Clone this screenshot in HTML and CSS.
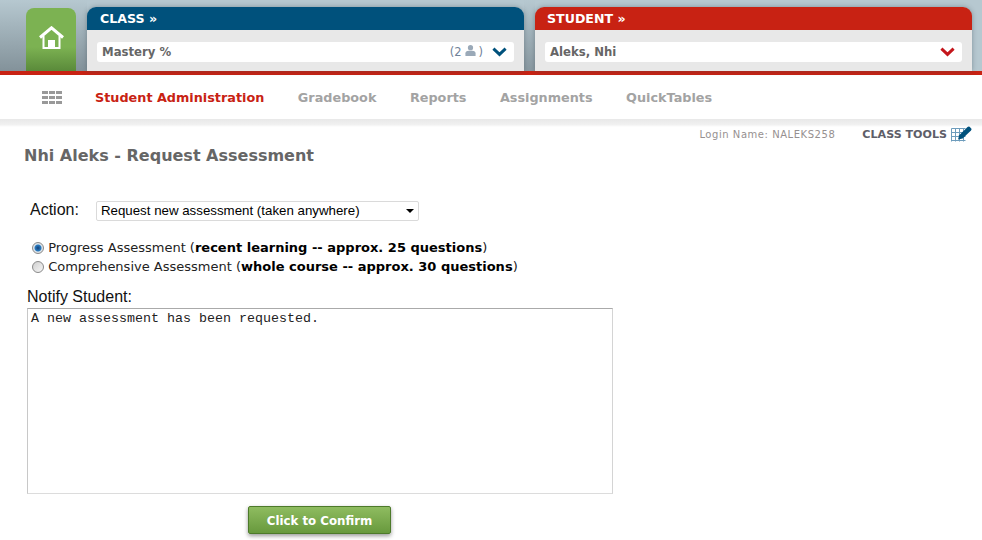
FILE: index.html
```html
<!DOCTYPE html>
<html lang="en">
<head>
  <meta charset="UTF-8" />
  <title>Request Assessment</title>
  <link rel="stylesheet" href="styles.css">
</head>
<body>
  <!-- Top panels -->
  <header class="top-bar">
    <a class="home-tile" href="#">
      <svg width="25" height="23" viewBox="0 0 25 23">
        <path d="M1 11.5 L12.5 1.8 L24 11.5" fill="none" stroke="#fff" stroke-width="3"/>
        <path d="M4.5 10 V22 H20.5 V10" fill="none" stroke="#fff" stroke-width="2"/>
        <rect x="9" y="14" width="7" height="8" fill="#fff"/>
      </svg>
    </a>
    <section class="panel panel-class">
      <div class="panel-head">CLASS &raquo;</div>
      <div class="panel-body">
        <div class="panel-field">
          <span class="field-name">Mastery %</span>
          <span class="field-count">(2
            <svg width="11" height="11" viewBox="0 0 13 13"><circle cx="6.5" cy="3.2" r="3.1" fill="#9aa9b8"/><path d="M0.5 13 V9.8 Q0.5 7.2 4.5 6.8 H8.5 Q12.5 7.2 12.5 9.8 V13 Z" fill="#9aa9b8"/></svg>
          )</span>
          <svg class="chevron" width="15" height="10" viewBox="0 0 16 10"><path d="M1.5 1.5 L8 7.5 L14.5 1.5" fill="none" stroke="#00517c" stroke-width="3.2"/></svg>
        </div>
      </div>
    </section>
    <section class="panel panel-student">
      <div class="panel-head">STUDENT &raquo;</div>
      <div class="panel-body">
        <div class="panel-field">
          <span class="field-name">Aleks, Nhi</span>
          <svg class="chevron" width="15" height="10" viewBox="0 0 16 10"><path d="M1.5 1.5 L8 7.5 L14.5 1.5" fill="none" stroke="#c4161c" stroke-width="3.2"/></svg>
        </div>
      </div>
    </section>
  </header>

  <!-- Main nav -->
  <nav class="main-nav">
    <div class="grid-icon">
      <i></i><i></i><i></i><i></i><i></i><i></i><i></i><i></i><i></i>
    </div>
    <a class="active" href="#">Student Administration</a>
    <a href="#">Gradebook</a>
    <a href="#">Reports</a>
    <a href="#">Assignments</a>
    <a href="#">QuickTables</a>
  </nav>
  <div class="nav-shadow"></div>

  <div class="tools-row">
    <span class="login-name">Login Name: NALEKS258</span>
    <a class="class-tools" href="#">CLASS TOOLS
      <svg width="21" height="17" viewBox="0 0 21 17">
        <path d="M0.5 2.5 H14.5 M0.5 6.5 H14.5 M0.5 10.5 H14.5 M0.5 14.5 H14.5 M0.5 2.5 V15.5 M4.5 2.5 V15.5 M8.5 2.5 V15.5 M12.5 2.5 V15.5" stroke="#6d9cbc" fill="none"/>
        <path d="M7 13.5 L8.2 9.2 L16.5 1 Q17.6 0 18.6 0.8 L20.2 2.4 Q21 3.4 20 4.4 L11.6 12.4 Z" fill="#00517c"/>
      </svg>
    </a>
  </div>

  <h1 class="page-title">Nhi Aleks - Request Assessment</h1>

  <form class="assess-form">
    <div class="action-row">
      <label class="big-label" for="action">Action:</label>
      <div class="select-wrap">
        <select id="action">
          <option>Request new assessment (taken anywhere)</option>
        </select>
      </div>
    </div>

    <div class="radio-group">
      <label><input type="radio" name="kind" checked /> Progress Assessment (<b>recent learning -- approx. 25 questions</b>)</label>
      <label><input type="radio" name="kind" /> Comprehensive Assessment (<b>whole course -- approx. 30 questions</b>)</label>
    </div>

    <label class="big-label notify-label" for="notify">Notify Student:</label>
    <textarea id="notify">A new assessment has been requested.</textarea>

    <div class="confirm-row">
      <button type="submit">Click to Confirm</button>
    </div>
  </form>
</body>
</html>
```

FILE: styles.css
```css
* {
  box-sizing: border-box;
  margin: 0;
  padding: 0;
}

body {
  width: 982px;
  height: 540px;
  overflow: hidden;
  background: #fff;
  font-family: "DejaVu Sans", Verdana, sans-serif;
}

a {
  text-decoration: none;
}

/* Top panels */
.top-bar {
  display: flex;
  height: 75px;
  padding: 7px 10px 0 26px;
  border-bottom: 4px solid #c82213;
  background:
    linear-gradient(#b6c8d0, #83929a) 0 0 / 87px 100% no-repeat,
    linear-gradient(#b6c8d0, #8a99a1) 524px 0 / 11px 100% no-repeat,
    #b6c8d0;
}

.home-tile {
  display: flex;
  justify-content: center;
  width: 50px;
  margin-top: 1px;
  margin-right: 11px;
  padding-top: 18px;
  border-radius: 8px 8px 0 0;
  background: linear-gradient(#7cb252 0%, #7cb252 62%, #5a8a3a 100%);
}

.panel {
  width: 437px;
  border-radius: 9px 9px 0 0;
  overflow: hidden;
  box-shadow: 0 0 5px rgba(60, 75, 85, 0.45);
}

.panel-student {
  margin-left: 11px;
}

.panel-head {
  height: 23px;
  padding-left: 12px;
  color: #fff;
  font-size: 12.6px;
  font-weight: bold;
  line-height: 24px;
}

.panel-class .panel-head {
  padding-left: 13px;
  background: #00517c;
}

.panel-student .panel-head {
  background: #c82213;
}

.panel-body {
  height: 41px;
  padding: 12px 10px 0;
  background: #e8e8e8;
}

.panel-field {
  display: flex;
  align-items: center;
  height: 20px;
  padding: 0 7px 0 5px;
  border-radius: 3px;
  background: #fff;
  color: #666;
  font-size: 11.7px;
  font-weight: bold;
}

.field-name {
  flex: 1;
}

.field-count {
  display: flex;
  align-items: center;
  gap: 3px;
  margin-right: 9px;
  color: #6f8299;
  font-size: 11.5px;
  font-weight: normal;
}

.field-count svg {
  margin-bottom: 4px;
}

/* Main nav */
.main-nav {
  display: flex;
  align-items: center;
  gap: 33.5px;
  height: 44px;
  padding-left: 42px;
  background: #fff;
}

.main-nav a {
  color: #a3a3a3;
  font-size: 12.8px;
  font-weight: bold;
}

.main-nav a.active {
  color: #c82213;
}

.grid-icon {
  display: grid;
  grid-template-columns: repeat(3, 6px);
  grid-auto-rows: 3px;
  gap: 2px 1px;
  width: 20px;
  margin-right: -0.5px;
}

.grid-icon i {
  background: #999;
}

.nav-shadow {
  height: 8px;
  background: linear-gradient(#e8e8e8, #f1f1f1 70%, #fff);
}

.tools-row {
  display: flex;
  justify-content: flex-end;
  align-items: center;
  height: 16px;
  margin-top: -1px;
  padding-right: 10px;
}

.login-name {
  margin-right: 27px;
  color: #969090;
  font-size: 10px;
  letter-spacing: 0.55px;
}

.class-tools {
  display: flex;
  align-items: center;
  gap: 4px;
  color: #5e5e68;
  font-size: 11.1px;
  font-weight: bold;
}

.page-title {
  margin: 4px 0 0 24px;
  color: #666;
  font-size: 16px;
  font-weight: bold;
  line-height: 20px;
}

/* Form */
.assess-form {
  padding-left: 27px;
}

.big-label {
  color: #111;
  font-family: "Liberation Sans", Arial, sans-serif;
  font-size: 16px;
}

.action-row {
  display: flex;
  align-items: center;
  gap: 17px;
  margin: 34px 0 0 3px;
}

.select-wrap {
  position: relative;
  width: 323px;
  height: 20px;
}

.select-wrap::after {
  content: "";
  position: absolute;
  top: 9px;
  right: 5px;
  border: 4px solid transparent;
  border-top: 4px solid #000;
  border-bottom: 0;
}

.select-wrap select {
  width: 100%;
  height: 100%;
  padding: 0 0 1px 4px;
  border: 1px solid #dadada;
  border-radius: 2px;
  background: #fff;
  color: #000;
  font-family: "Liberation Sans", Arial, sans-serif;
  font-size: 13.3px;
  appearance: none;
}

.radio-group {
  display: flex;
  flex-direction: column;
  margin: 18px 0 0 5px;
  color: #222;
  font-size: 13px;
  line-height: 19px;
}

.radio-group b {
  color: #000;
}

.radio-group label {
  display: flex;
  align-items: center;
  white-space: pre;
}

.radio-group input {
  width: 12px;
  height: 12px;
  border: 1px solid #8a8a8a;
  border-radius: 50%;
  background: linear-gradient(135deg, #cfcfcf, #f6f6f6);
  appearance: none;
}

.radio-group input:checked {
  background: radial-gradient(circle, #123f78 0, #2a7cc0 3px, #dfe6ec 4px, #d8d8d8 100%);
}

.notify-label {
  display: block;
  margin-top: 12px;
  line-height: 18px;
}

textarea {
  display: block;
  width: 586px;
  height: 186px;
  margin-top: 2px;
  padding: 2px 3px;
  border: 1px solid;
  border-color: #aaa #d4d4d4 #dcdcdc #c8c8c8;
  color: #222;
  font-family: "Liberation Mono", "Courier New", monospace;
  font-size: 13.33px;
  line-height: 15px;
  resize: none;
}

.confirm-row {
  margin: 12px 0 0 221px;
}

.confirm-row button {
  width: 143px;
  height: 28px;
  padding-top: 1px;
  border: 1px solid #4d7a2a;
  border-radius: 2px;
  background: linear-gradient(#8fbc60, #68993d);
  box-shadow: 0 2px 4px rgba(0, 0, 0, 0.4);
  color: #fff;
  font-family: "DejaVu Sans", Verdana, sans-serif;
  font-size: 11.8px;
  font-weight: bold;
}
```
